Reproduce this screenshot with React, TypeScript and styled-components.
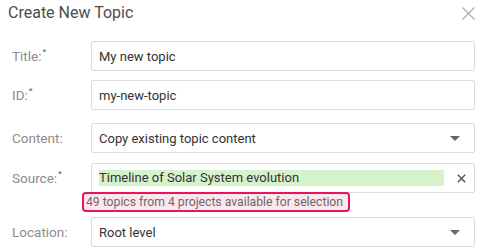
import React, { ReactElement } from 'react';
import styled, { createGlobalStyle } from 'styled-components';

const GlobalStyle = createGlobalStyle`
  html, body {
    margin: 0;
    padding: 0;
    background: #ffffff;
  }
  body {
    font-family: Roboto, "Noto Sans", sans-serif;
  }
`;

const Dialog = styled.div`
  width: 486px;
  height: 252px;
  box-sizing: border-box;
  padding: 0 11px 0 12px;
  overflow: hidden;
`;

const Header = styled.div`
  height: 41px;
  margin-left: -4px;
  display: flex;
  justify-content: space-between;
  align-items: flex-start;
`;

const Heading = styled.h1`
  margin: 0;
  padding-top: 3px;
  font-size: 16px;
  font-weight: 400;
  color: #4d4d4d;
  line-height: 19px;
`;

const CloseButton = styled.button`
  border: 0;
  background: none;
  padding: 0;
  margin: 7px 0 0 0;
  width: 13px;
  height: 13px;
  display: flex;
  cursor: pointer;
`;

const Row = styled.div<{ $gap: number }>`
  display: grid;
  grid-template-columns: 79px 1fr;
  align-items: center;
  margin-top: ${({ $gap }): string => `${$gap}px`};
`;

const Label = styled.label`
  font-size: 13.5px;
  color: #8c8c8c;
  display: flex;
  align-items: flex-start;
`;

const Required = styled.span`
  color: #2e9b3e;
  font-size: 8px;
  line-height: 8px;
  font-weight: 700;
  margin-left: 1px;
  margin-top: 0px;
`;

const Field = styled.div`
  height: 30px;
  box-sizing: border-box;
  border: 1px solid #dcdcdc;
  border-radius: 2px;
  display: flex;
  align-items: center;
  padding: 0 7px 0 7px;
  font-size: 13px;
  color: #333333;
  background: #ffffff;
`;

const Value = styled.span`
  flex: 1;
  white-space: nowrap;
`;

const Highlight = styled.span`
  flex: 0 0 345px;
  background: #d6f1cc;
  height: 16px;
  line-height: 16px;
  white-space: nowrap;
`;

const Caret = styled.span`
  width: 0;
  height: 0;
  margin-right: 7px;
  border-left: 5px solid transparent;
  border-right: 5px solid transparent;
  border-top: 5px solid #666666;
`;

const ClearButton = styled.button`
  border: 0;
  background: none;
  padding: 0;
  margin: 0 1px 0 auto;
  width: 9px;
  height: 9px;
  display: flex;
`;

const Source = styled.div`
  display: grid;
  grid-template-columns: 79px 1fr;
  align-items: center;
  margin-top: 10px;
`;

const Notice = styled.div`
  grid-column: 2;
  justify-self: start;
  margin: -1px 0 0 -9px;
  height: 20px;
  box-sizing: border-box;
  border: 2px solid #e2185b;
  border-radius: 4px;
  background: #fde7ef;
  padding: 0 5px 0 2px;
  font-size: 12.2px;
  line-height: 16px;
  color: #6a6a6a;
  white-space: nowrap;
`;

function App(): ReactElement {
  return (
    <Dialog>
      <GlobalStyle />
      <Header>
        <Heading>Create New Topic</Heading>
        <CloseButton aria-label="Close">
          <svg width="13" height="13" viewBox="0 0 13 13">
            <path d="M0.5 0.5 L12.5 12.5 M12.5 0.5 L0.5 12.5" stroke="#a9a9a9" strokeWidth="1.1" fill="none" />
          </svg>
        </CloseButton>
      </Header>

      <Row $gap={0}>
        <Label>Title:<Required>*</Required></Label>
        <Field><Value>My new topic</Value></Field>
      </Row>

      <Row $gap={9}>
        <Label>ID:<Required>*</Required></Label>
        <Field><Value>my-new-topic</Value></Field>
      </Row>

      <Row $gap={13}>
        <Label>Content:</Label>
        <Field>
          <Value>Copy existing topic content</Value>
          <Caret />
        </Field>
      </Row>

      <Source>
        <Label>Source:<Required>*</Required></Label>
        <Field>
          <Highlight>Timeline of Solar System evolution</Highlight>
          <ClearButton aria-label="Clear">
            <svg width="9" height="9" viewBox="0 0 9 9">
              <path d="M0.8 0.8 L8.2 8.2 M8.2 0.8 L0.8 8.2" stroke="#555555" strokeWidth="1.4" fill="none" />
            </svg>
          </ClearButton>
        </Field>
        <Notice>49 topics from 4 projects available for selection</Notice>
      </Source>

      <Row $gap={5}>
        <Label>Location:</Label>
        <Field>
          <Value>Root level</Value>
          <Caret />
        </Field>
      </Row>
    </Dialog>
  );
}

export default App;
